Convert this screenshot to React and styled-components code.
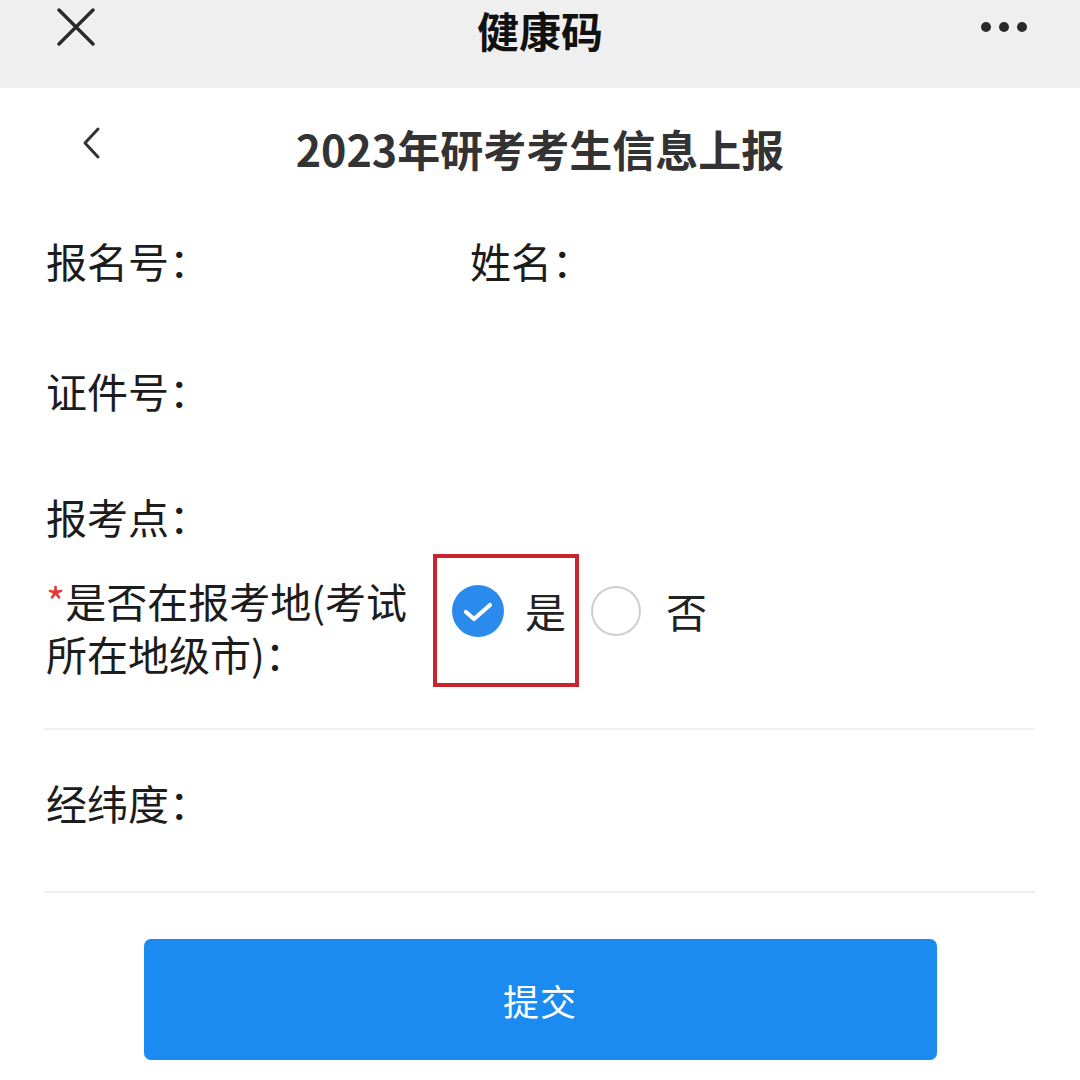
import React from "react";
import styled, { createGlobalStyle } from "styled-components";

const GlobalStyle = createGlobalStyle`
  * { box-sizing: border-box; }
  body {
    margin: 0;
    background: #ffffff;
    font-family: "Noto Sans CJK SC", "Noto Sans", sans-serif;
    color: #1c1c1c;
  }
`;

const Page = styled.div`
  width: 1080px;
  height: 1080px;
  overflow: hidden;
  background: #ffffff;
`;

const TopBar = styled.div`
  height: 88px;
  background: #efefef;
  display: grid;
  grid-template-columns: 1fr auto 1fr;
  align-items: start;
  .left {
    padding: 8px 0 0 57px;
    display: flex;
  }
  .right {
    padding: 22px 53px 0 0;
    display: flex;
    justify-content: flex-end;
  }
`;

const AppTitle = styled.div`
  font-size: 42px;
  font-weight: 700;
  line-height: 60px;
  color: #111;
`;

const Dots = styled.div`
  display: flex;
  gap: 8px;
  span {
    width: 10px;
    height: 10px;
    border-radius: 50%;
    background: #2a2a2a;
  }
`;

const Header = styled.div`
  height: 107px;
  display: grid;
  grid-template-columns: 1fr auto 1fr;
  align-items: start;
  .back {
    padding: 38px 0 0 80px;
    display: flex;
  }
`;

const PageTitle = styled.div`
  padding-top: 32px;
  font-size: 43px;
  font-weight: 700;
  line-height: 56px;
  color: #333;
`;

const Form = styled.div`
  padding: 0 45px 0 44px;
`;

const Row = styled.div`
  height: ${(p) => p.$h}px;
  display: grid;
  grid-template-columns: ${(p) => (p.$split ? "424px 1fr" : "1fr")};
  align-items: ${(p) => (p.$top ? "start" : "center")};
  padding-top: ${(p) => p.$pt || 0}px;
  padding-left: 2px;
  border-bottom: ${(p) => (p.$line ? "2px solid #efefef" : "none")};
`;

const Label = styled.div`
  font-size: 41px;
  line-height: 53px;
  color: #1c1c1c;
  white-space: nowrap;
  .req {
    color: #e03a3a;
  }
`;

const RadioRow = styled.div`
  height: 153px;
  display: flex;
  align-items: flex-start;
  padding-left: 2px;
  border-bottom: 2px solid #efefef;
`;

const RadioLabel = styled(Label)`
  width: 387px;
  margin-top: -3px;
`;

const Options = styled.div`
  display: flex;
  align-items: flex-start;
  margin-top: -23px;
`;

const Marked = styled.div`
  width: 146px;
  height: 133px;
  border: 4px solid #c8262e;
  display: flex;
  align-items: flex-start;
  padding-left: 15px;
  padding-top: 26px;
`;

const Option = styled.div`
  display: flex;
  align-items: center;
  margin-left: ${(p) => p.$ml || 0}px;
  margin-top: ${(p) => p.$mt || 0}px;
  font-size: 41px;
  line-height: 53px;
  color: #222;
`;

const Circle = styled.span`
  width: ${(p) => (p.$on ? 52 : 50)}px;
  height: ${(p) => (p.$on ? 52 : 50)}px;
  border-radius: 50%;
  display: inline-flex;
  align-items: center;
  justify-content: center;
  margin-right: ${(p) => (p.$on ? 21 : 25)}px;
  background: ${(p) => (p.$on ? "#2a8bec" : "#fff")};
  border: ${(p) => (p.$on ? "none" : "2px solid #cfcfcf")};
`;

const SubmitWrap = styled.div`
  display: flex;
  justify-content: center;
  padding-top: 46px;
`;

const Submit = styled.button`
  width: 793px;
  height: 121px;
  border: none;
  border-radius: 7px;
  background: #1b8bf1;
  color: #ffffff;
  font-family: "Noto Sans CJK SC", sans-serif;
  font-size: 36px;
  letter-spacing: 1px;
`;

const CloseIcon = () => (
  <svg width="38" height="38" viewBox="0 0 38 38">
    <path d="M2 2 L36 36 M36 2 L2 36" stroke="#2a2a2a" strokeWidth="3.4" strokeLinecap="round" fill="none" />
  </svg>
);

const BackIcon = () => (
  <svg width="22" height="34" viewBox="0 0 22 34">
    <path d="M18 3 L5 17 L18 31" stroke="#333" strokeWidth="3" strokeLinecap="round" strokeLinejoin="round" fill="none" />
  </svg>
);

const Check = () => (
  <svg width="34" height="28" viewBox="0 0 34 28">
    <path d="M5 15 L13 22 L29 8" stroke="#fff" strokeWidth="4.2" strokeLinecap="round" strokeLinejoin="round" fill="none" />
  </svg>
);

export default function App() {
  return (
    <Page>
      <GlobalStyle />
      <TopBar>
        <div className="left">
          <CloseIcon />
        </div>
        <AppTitle>健康码</AppTitle>
        <div className="right">
          <Dots>
            <span />
            <span />
            <span />
          </Dots>
        </div>
      </TopBar>
      <Header>
        <div className="back">
          <BackIcon />
        </div>
        <PageTitle>2023年研考考生信息上报</PageTitle>
        <div />
      </Header>
      <Form>
        <Row $h={130} $split>
          <Label>报名号：</Label>
          <Label>姓名：</Label>
        </Row>
        <Row $h={130}>
          <Label>证件号：</Label>
        </Row>
        <Row $h={122}>
          <Label>报考点：</Label>
        </Row>
        <RadioRow>
          <RadioLabel>
            <span className="req">*</span>是否在报考地(考试
            <br />
            所在地级市)：
          </RadioLabel>
          <Options>
            <Marked>
              <Option>
                <Circle $on>
                  <Check />
                </Circle>
                是
              </Option>
            </Marked>
            <Option $ml={12} $mt={30}>
              <Circle />否
            </Option>
          </Options>
        </RadioRow>
        <Row $h={163} $top $pt={46} $line>
          <Label>经纬度：</Label>
        </Row>
      </Form>
      <SubmitWrap>
        <Submit>提交</Submit>
      </SubmitWrap>
    </Page>
  );
}
